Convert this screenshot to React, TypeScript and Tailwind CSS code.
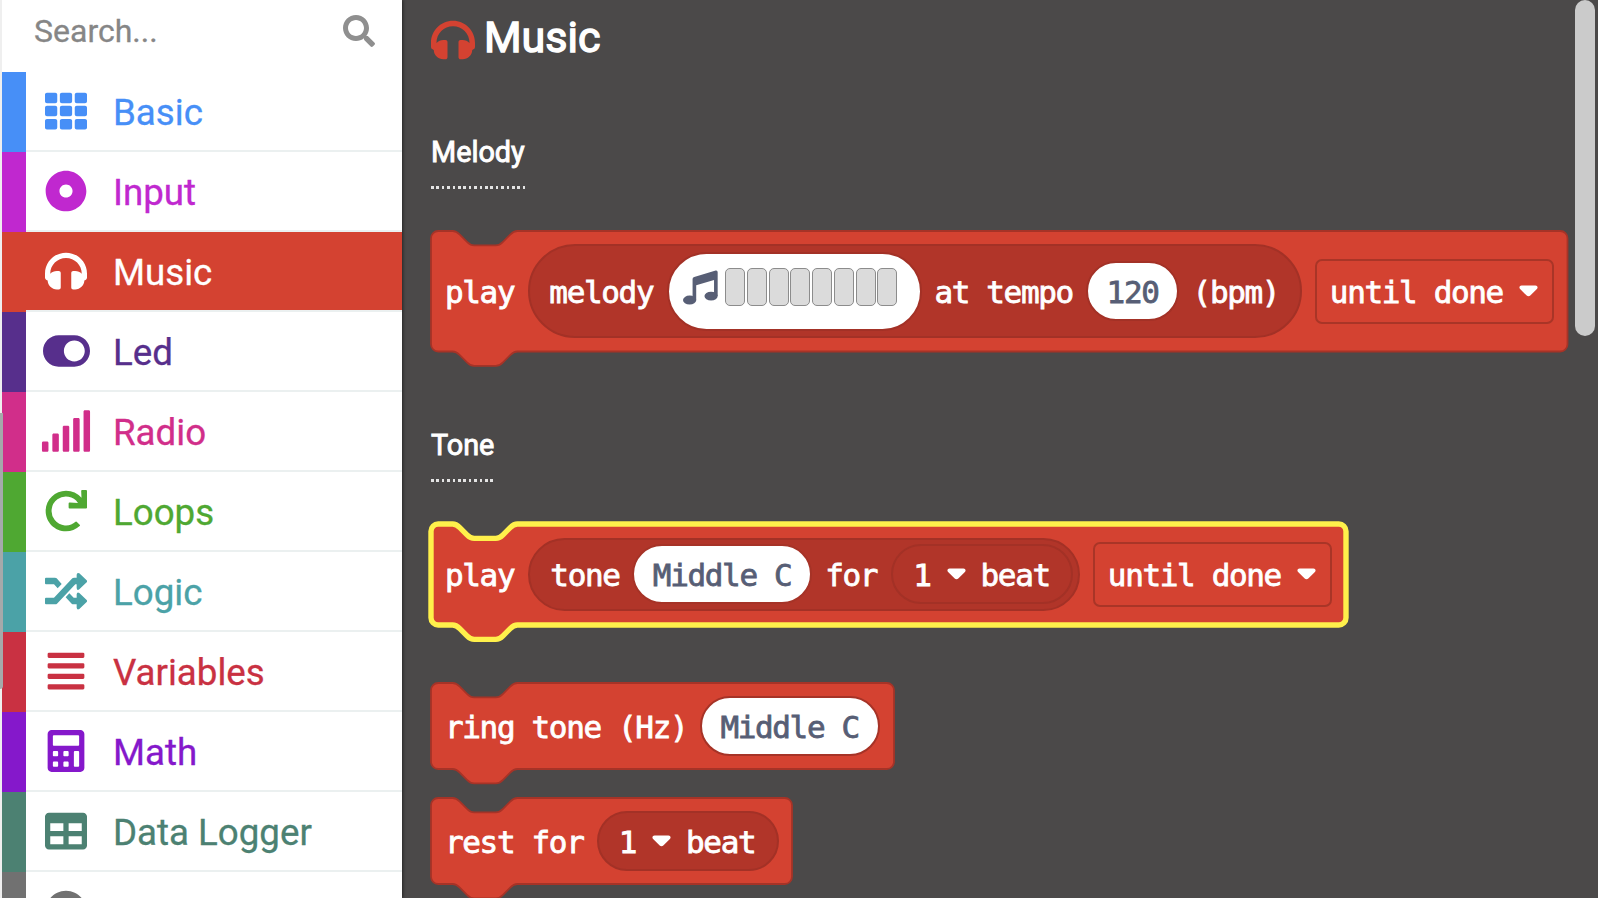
import type { ComponentType, ReactNode } from "react";
import {
  FaAlignJustify,
  FaCalculator,
  FaChevronCircleDown,
  FaDotCircle,
  FaHeadphones,
  FaRedo,
  FaSearch,
  FaSignal,
  FaTable,
  FaTh,
  FaToggleOn,
} from "react-icons/fa";

function ShuffleIcon({ className }: { className?: string }) {
  return (
    <svg className={className} viewBox="0 -9 126 126" fill="currentColor">
      <path d="M3 14H30q3 0 5 2L50 33 38 46 27 34H3q-3 0-3-3V17q0-3 3-3z" />
      <path d="M3 74H27L82 16q2-2 5-2h8V5q1-8 8-4l22 21q3 3 0 6l-22 21q-7 5-8-4V34h-4L36 92q-2 2-5 2H3q-3 0-3-3V77q0-3 3-3z" />
      <path d="M62 73 73 61 86 74h9V64q1-8 8-4l22 21q3 3 0 6l-22 21q-7 4-8-4V94H85q-3 0-5-2z" />
    </svg>
  );
}

type Category = {
  name: string;
  icon: ComponentType<{ className?: string }>;
  bar: string;
  text: string;
  iconSize?: string;
  selected?: boolean;
};

const categories: Category[] = [
  { name: "Basic", icon: FaTh, bar: "bg-[#478ff7]", text: "text-[#478ff7]" },
  { name: "Input", icon: FaDotCircle, bar: "bg-[#c028cf]", text: "text-[#c028cf]" },
  { name: "Music", icon: FaHeadphones, bar: "bg-[#d44231]", text: "text-white", selected: true },
  { name: "Led", icon: FaToggleOn, bar: "bg-[#572f8c]", text: "text-[#572f8c]", iconSize: "w-[47px]" },
  { name: "Radio", icon: FaSignal, bar: "bg-[#d12e8a]", text: "text-[#d12e8a]", iconSize: "w-[52px]" },
  { name: "Loops", icon: FaRedo, bar: "bg-[#4fa832]", text: "text-[#4fa832]" },
  { name: "Logic", icon: ShuffleIcon, bar: "bg-[#4ba2a7]", text: "text-[#4ba2a7]" },
  { name: "Variables", icon: FaAlignJustify, bar: "bg-[#c93142]", text: "text-[#c93142]" },
  { name: "Math", icon: FaCalculator, bar: "bg-[#8518cb]", text: "text-[#8518cb]" },
  { name: "Data Logger", icon: FaTable, bar: "bg-[#4c8172]", text: "text-[#4c8172]" },
  { name: "", icon: FaChevronCircleDown, bar: "bg-[#717171]", text: "text-[#717171]" },
];

function CategoryRow({ name, icon: Icon, bar, text, iconSize = "w-[42px]", selected }: Category) {
  return (
    <div className="flex h-20 shrink-0">
      <div className={`w-6 shrink-0 ${bar}`} />
      <div
        className={`flex flex-1 items-center border-b-2 border-[#ebf0f0] ${text} ${selected ? "bg-[#d44231]" : "bg-white"}`}
      >
        <div className="ml-3.5 flex w-[52px] justify-center">
          <Icon className={`h-[42px] shrink-0 ${iconSize}`} />
        </div>
        <span className="ml-[21px] pt-[5px] text-[36.7px] leading-none whitespace-nowrap [-webkit-text-stroke:0.3px_currentColor]">
          {name}
        </span>
      </div>
    </div>
  );
}

function Sidebar() {
  return (
    <aside className="relative flex w-[402px] shrink-0 flex-col overflow-hidden bg-white pl-0.5 shadow-[1px_0_3px_rgba(0,0,0,0.5)]">
      <div className="flex h-[72px] shrink-0 items-center justify-between pr-[27px] pb-2.5 pl-8">
        <span className="text-[32px] leading-none text-[#868686] [-webkit-text-stroke:0.3px_currentColor]">
          Search...
        </span>
        <FaSearch className="size-8 text-[#8f8f8f]" />
      </div>
      {categories.map((c) => (
        <CategoryRow key={c.bar} {...c} />
      ))}
      <div className="absolute inset-y-0 left-0 w-0.5 bg-[#efefef]" />
      <div className="absolute top-[413px] left-0 h-[276px] w-[3px] rounded-br-sm bg-[#a5a9aa]" />
    </aside>
  );
}

function Heading({ children }: { children: ReactNode }) {
  return (
    <div className="inline-flex flex-col">
      <h2 className="text-[28.8px] leading-[35px] font-normal text-white [-webkit-text-stroke:0.9px_currentColor]">
        {children}
      </h2>
      <div className="mt-4 h-[3px] bg-[repeating-linear-gradient(90deg,#e4e4e4_0_2.6px,transparent_2.6px_5.4px)]" />
    </div>
  );
}

/* A statement block: notch in the top edge, matching tab on the bottom edge. */
function Block({
  width,
  height,
  selected,
  children,
}: {
  width: number;
  height: number;
  selected?: boolean;
  children: ReactNode;
}) {
  const r = 7.2;
  const d = [
    `M0,${r} a${r},${r} 0 0 1 ${r},${-r} H21.6`,
    "c3.6,0 5.4,1.8 7.2,3.6 l7.2,7.2 c1.8,1.8 3.6,3.6 7.2,3.6 h21.6",
    "c3.6,0 5.4,-1.8 7.2,-3.6 l7.2,-7.2 c1.8,-1.8 3.6,-3.6 7.2,-3.6",
    `H${width - r} a${r},${r} 0 0 1 ${r},${r} V${height - r} a${r},${r} 0 0 1 ${-r},${r} H86.4`,
    "c-3.6,0 -5.4,1.8 -7.2,3.6 l-7.2,7.2 c-1.8,1.8 -3.6,3.6 -7.2,3.6 h-21.6",
    "c-3.6,0 -5.4,-1.8 -7.2,-3.6 l-7.2,-7.2 c-1.8,-1.8 -3.6,-3.6 -7.2,-3.6",
    `H${r} a${r},${r} 0 0 1 ${-r},${-r} z`,
  ].join(" ");
  return (
    <div className="relative" style={{ width, height }}>
      <svg className="absolute inset-0 overflow-visible" width={width} height={height}>
        <path
          d={d}
          fill="#d44231"
          stroke={selected ? "#fff04b" : "#a63327"}
          strokeWidth={selected ? 5.4 : 1.8}
        />
      </svg>
      <div className="relative flex h-full items-center pl-3.5">{children}</div>
    </div>
  );
}

function Label({ children }: { children: string }) {
  return (
    <span
      className="shrink-0 pt-0.5 font-['DejaVu_Sans_Mono',monospace] text-[31px] leading-9 tracking-[-1.36px] whitespace-pre [-webkit-text-stroke:0.8px_currentColor]"
      style={{ width: children.length * 17.34 }}
    >
      {children}
    </span>
  );
}

function Caret({ className }: { className: string }) {
  return (
    <svg className={`h-3 w-[19px] shrink-0 ${className}`} viewBox="0 0 19 12">
      <path
        d="M2.6 0.4h13.8c2 0 2.9 2.2 1.5 3.6l-6.6 6.6c-1 1-2.6 1-3.6 0L1.1 4C-.3 2.6.6.4 2.6.4z"
        fill="#fff"
      />
    </svg>
  );
}

function ModeDropdown() {
  return (
    <div className="ml-[13px] flex h-[65px] w-[239px] shrink-0 items-center rounded-[7px] border-2 border-[#a93527] pl-[12.5px]">
      <Label>until done</Label>
      <Caret className="ml-4" />
    </div>
  );
}

function BeatPicker({ className }: { className: string }) {
  return (
    <div
      className={`flex h-[60px] w-[182px] shrink-0 items-center rounded-full border-2 border-[#a33126] bg-[#b13529] pl-5 ${className}`}
    >
      <Label>1</Label>
      <Caret className="ml-4" />
      <span className="ml-[15px] flex">
        <Label>beat</Label>
      </span>
    </div>
  );
}

function NotePill({ className }: { className: string }) {
  return (
    <div
      className={`flex h-[60px] w-[180px] shrink-0 items-center justify-center rounded-full border-2 border-[#a63327] bg-white text-[#575e75] ${className}`}
    >
      <Label>Middle C</Label>
    </div>
  );
}

function NotesIcon() {
  return (
    <svg className="size-[35px] shrink-0" viewBox="0 0 106 106" fill="#575e75">
      <path d="M29 27q0-4.500 5-6L99 1.500q6-1 6 5V79H94V30L40 46V92H29z" />
      <ellipse cx="20" cy="91" rx="20" ry="13.500" />
      <ellipse cx="85" cy="79" rx="20" ry="13.500" />
    </svg>
  );
}

function MelodyPill() {
  return (
    <div className="ml-3.5 flex h-[79px] w-[255px] shrink-0 items-center rounded-full border-2 border-[#a33126] bg-white pb-2 pl-3.5">
      <NotesIcon />
      <div className="ml-[7px] flex gap-[1.7px]">
        {[0, 1, 2, 3, 4, 5, 6, 7].map((i) => (
          <div key={i} className="h-[38px] w-5 rounded-[5px] border-[1.5px] border-[#8c8c8c] bg-[#dbdbdb]" />
        ))}
      </div>
    </div>
  );
}

export default function App() {
  return (
    <div className="flex h-[898px] w-[1598px] overflow-hidden bg-[#4b4949] font-[Roboto,sans-serif]">
      <Sidebar />
      <main className="relative flex-1 overflow-hidden pl-[29px] text-white">
        <header className="flex h-[76px] items-center">
          <FaHeadphones className="mt-[3px] -ml-[0.5px] size-11 text-[#d44231]" />
          <h1 className="mb-0.5 ml-[9.5px] text-[43px] leading-none font-normal [-webkit-text-stroke:1.4px_currentColor]">
            Music
          </h1>
        </header>

        <section className="mt-[59px]">
          <Heading>Melody</Heading>
          <div className="mt-[42px]">
            <Block width={1136.5} height={120.5}>
              <Label>play</Label>
              <div className="ml-3.5 flex h-[94px] w-[774px] shrink-0 items-center rounded-full border-2 border-[#a33126] bg-[#b13529] pl-[19px]">
                <Label>melody</Label>
                <MelodyPill />
                <span className="ml-3 flex">
                  <Label>at tempo</Label>
                </span>
                <div className="ml-[13px] flex h-[60px] w-[93px] shrink-0 items-center justify-center rounded-full border-2 border-[#a33126] bg-white text-[#575e75]">
                  <Label>120</Label>
                </div>
                <span className="ml-[13.5px] flex">
                  <Label>(bpm)</Label>
                </span>
              </div>
              <ModeDropdown />
            </Block>
          </div>
        </section>

        <section className="mt-[76px]">
          <Heading>Tone</Heading>
          <div className="mt-[42px] flex flex-col">
            <Block width={915} height={101} selected>
              <Label>play</Label>
              <div className="ml-3.5 flex h-[73px] w-[552px] shrink-0 items-center rounded-full border-2 border-[#a33126] bg-[#b13529] pl-5">
                <Label>tone</Label>
                <NotePill className="ml-[12.5px]" />
                <span className="ml-[13px] flex">
                  <Label>for</Label>
                </span>
                <BeatPicker className="ml-3.5" />
              </div>
              <ModeDropdown />
            </Block>
            <div className="mt-[58px]">
              <Block width={463} height={86}>
                <Label>ring tone (Hz)</Label>
                <NotePill className="ml-3" />
              </Block>
            </div>
            <div className="mt-[29px]">
              <Block width={361} height={86}>
                <Label>rest for</Label>
                <BeatPicker className="ml-[13px]" />
              </Block>
            </div>
          </div>
        </section>

        <div className="absolute top-0 right-[3px] h-[336px] w-5 rounded-full bg-[#cbcbcb]" />
      </main>
    </div>
  );
}
